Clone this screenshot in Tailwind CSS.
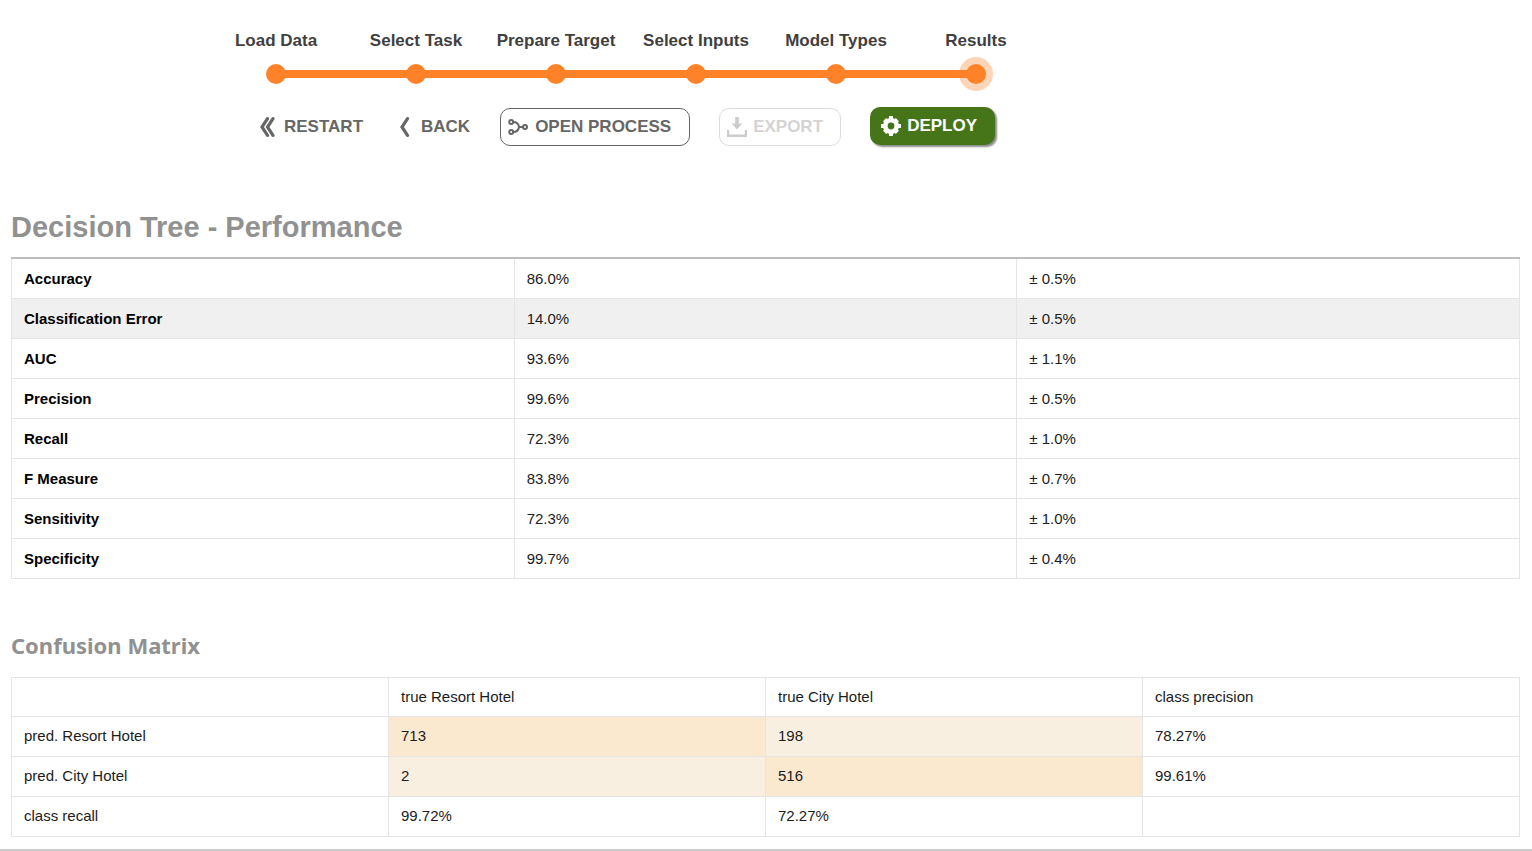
<!DOCTYPE html>
<html lang="en">
<head>
<meta charset="utf-8">
<meta name="viewport" content="width=device-width, initial-scale=1">
<title>Decision Tree - Performance</title>
<script src="https://cdn.jsdelivr.net/npm/@tailwindcss/browser@4"></script>
</head>
<body class="bg-white font-['Liberation_Sans',Arial,sans-serif] text-[15px] leading-5 text-[#1c1c1c]">
<main class="border-b-2 border-[#cccccc]">
  <header class="ml-[206px] max-w-[840px] pt-[29px] text-[17px] font-bold leading-6">
    <ol class="grid grid-cols-6 text-center text-[#3f3f3f] whitespace-nowrap">
      <li>Load Data</li>
      <li>Select Task</li>
      <li>Prepare Target</li>
      <li>Select Inputs</li>
      <li>Model Types</li>
      <li>Results</li>
    </ol>
    <svg class="block h-[42px] w-full" viewBox="0 0 840 42" fill="#ff8228" aria-hidden="true">
      <circle cx="770" cy="21" r="17" fill="#ffd5b8"/>
      <path d="M70 17h700v8h-700z"/>
      <circle cx="70" cy="21" r="10"/><circle cx="210" cy="21" r="10"/><circle cx="350" cy="21" r="10"/>
      <circle cx="490" cy="21" r="10"/><circle cx="630" cy="21" r="10"/><circle cx="770" cy="21" r="10"/>
    </svg>
    <nav class="mt-3 flex items-start pl-[54px] text-[#666666]" aria-label="Wizard actions">
      <button type="button" class="flex h-10 items-center gap-2">
        <svg class="h-5 w-4" viewBox="0 0 16 20" fill="none" stroke="currentColor" stroke-width="3.200" stroke-linecap="round"><path d="M7.500 1.700L2 10L7.500 18.300M13 1.700L7.500 10L13 18.300"/></svg>
        RESTART
      </button>
      <button type="button" class="ml-9 flex h-10 items-center gap-[10px]">
        <svg class="h-5 w-3" viewBox="0 0 12 20" fill="none" stroke="currentColor" stroke-width="3.200" stroke-linecap="round"><path d="M8.500 1.700L3 10L8.500 18.300"/></svg>
        BACK
      </button>
      <button type="button" class="ml-[30px] mt-px flex h-[38px] w-[190px] items-center gap-[7px] rounded-[10px] border border-[#666666] pl-[7px]">
        <svg class="h-5 w-5" viewBox="0 0 20 20" fill="none" stroke="currentColor" stroke-width="2"><circle cx="3.200" cy="5" r="2"/><circle cx="3.200" cy="15" r="2"/><circle cx="17" cy="10" r="2"/><path d="M5.200 5C8.500 5 10.500 6.500 11 10C10.500 13.500 8.500 15 5.200 15M11 10h4"/></svg>
        OPEN PROCESS
      </button>
      <button type="button" disabled class="ml-[29px] mt-px flex h-[38px] w-[122px] items-center gap-[6px] rounded-[10px] border border-[#dcdcdc] pl-[7px] text-[#d4d4d4]">
        <svg class="h-5 w-5" viewBox="0 0 20 20" fill="#cccccc"><path d="M8.200 0h3.600v6.500h3.500L10 12.500L4.700 6.500h3.500zM0 13h2.200v4.500h15.600v-4.500H20v7H0z"/></svg>
        EXPORT
      </button>
      <button type="button" class="ml-[29px] flex h-[38px] w-[125px] items-center gap-[6px] rounded-[10px] bg-[#457518] pl-[11px] text-white shadow-[2px_2px_2px_#8c8c8c]">
        <svg class="h-5 w-5" viewBox="0 0 20 20" fill="none" stroke="#fff"><circle cx="10" cy="10" r="5.700" stroke-width="4.600"/><path stroke-width="4" d="M10 0v4M10 16v4M0 10h4M16 10h4"/><path stroke-width="4.400" d="M3.600 3.600l2 2M14.400 14.400l2 2M3.600 16.400l2-2M14.400 5.600l2-2"/></svg>
        DEPLOY
      </button>
    </nav>
  </header>

  <section class="pl-[11px] pr-3 pt-[60px]">
    <h1 class="text-[29px] font-bold leading-10 text-[#919191]">Decision Tree - Performance</h1>
    <table class="mt-[10px] w-full table-fixed border-collapse [&_td]:border [&_td]:border-[#e5e5e5] [&_td]:px-3 [&_td]:pt-[2px] [&_th]:border [&_th]:border-[#e5e5e5] [&_th]:px-3 [&_th]:pt-[2px] [&_th]:text-left [&_th]:text-black [&_tr]:h-10">
      <tbody class="border-t-2 border-[#bdbdbd]">
        <tr><th scope="row">Accuracy</th><td>86.0%</td><td>± 0.5%</td></tr>
        <tr class="bg-[#f0f0f0]"><th scope="row">Classification Error</th><td>14.0%</td><td>± 0.5%</td></tr>
        <tr><th scope="row">AUC</th><td>93.6%</td><td>± 1.1%</td></tr>
        <tr><th scope="row">Precision</th><td>99.6%</td><td>± 0.5%</td></tr>
        <tr><th scope="row">Recall</th><td>72.3%</td><td>± 1.0%</td></tr>
        <tr><th scope="row">F Measure</th><td>83.8%</td><td>± 0.7%</td></tr>
        <tr><th scope="row">Sensitivity</th><td>72.3%</td><td>± 1.0%</td></tr>
        <tr><th scope="row">Specificity</th><td>99.7%</td><td>± 0.4%</td></tr>
      </tbody>
    </table>
  </section>

  <section class="pb-3 pl-[11px] pr-3 pt-[50px]">
    <h2 class="font-['Noto_Sans','Open_Sans',sans-serif] text-[22px] font-bold leading-8 text-[#919191]">Confusion Matrix</h2>
    <table class="mt-4 w-full table-fixed border-collapse [&_td]:border [&_td]:border-[#e5e5e5] [&_td]:px-3 [&_th]:border [&_th]:border-[#e5e5e5] [&_th]:px-3 [&_th]:text-left [&_th]:font-normal">
      <thead>
        <tr class="h-[39px]"><td></td><th scope="col">true Resort Hotel</th><th scope="col">true City Hotel</th><th scope="col">class precision</th></tr>
      </thead>
      <tbody>
        <tr class="h-10"><th scope="row">pred. Resort Hotel</th><td class="bg-[#fae8cf]">713</td><td class="bg-[#f9efe1]">198</td><td>78.27%</td></tr>
        <tr class="h-10"><th scope="row">pred. City Hotel</th><td class="bg-[#f9efe1]">2</td><td class="bg-[#fae8cf]">516</td><td>99.61%</td></tr>
        <tr class="h-10"><th scope="row">class recall</th><td>99.72%</td><td>72.27%</td><td></td></tr>
      </tbody>
    </table>
  </section>
</main>
</body>
</html>
